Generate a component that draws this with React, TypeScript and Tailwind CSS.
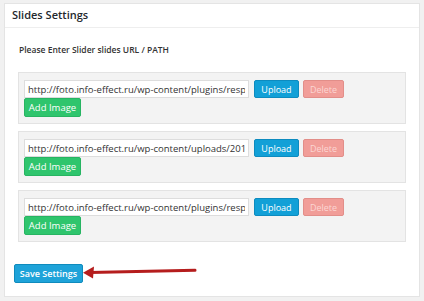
import React from "react";

const rows = [
  "http://foto.info-effect.ru/wp-content/plugins/responsive-slider/img/slide1.jpg",
  "http://foto.info-effect.ru/wp-content/uploads/2015/03/slide2.jpg",
  "http://foto.info-effect.ru/wp-content/plugins/responsive-slider/img/slide3.jpg",
];

const SlideRow = ({ url }: { url: string }) => (
  <div className="flex h-[52px] flex-col items-start border border-[#e3e3e3] bg-[#f3f3f3] pl-[5px] pt-[7px]">
    <div className="flex h-[18px] items-center">
      <input
        readOnly
        value={url}
        className="h-[18px] w-[225px] border border-[#dddddd] bg-white px-[3px] text-[9.5px] leading-none text-[#333] outline-none"
      />
      <button className="ml-[5px] h-[18px] w-[45px] rounded-[2px] border border-[#0d8bbf] bg-[#12a0d7] text-[9px] leading-none text-white">
        Upload
      </button>
      <button className="ml-[4px] h-[18px] w-[41px] rounded-[2px] border border-[#e28e89] bg-[#f19d98] text-[9px] leading-none text-[#fcd6d3]">
        Delete
      </button>
    </div>
    <button className="block h-[19px] w-[57px] rounded-[2px] border border-[#27b462] bg-[#2fc56d] text-[9.5px] leading-none text-white">
      Add Image
    </button>
  </div>
);

export default function App() {
  return (
    <div
      className="relative h-[301px] w-[424px] bg-[#f1f1f1] px-[4px] pt-[3px]"
      style={{ fontFamily: '"Open Sans", "Noto Sans", sans-serif' }}
    >
      <div className="h-[294px] border border-[#e4e4e4] bg-white">
        <div className="flex h-[24px] items-center border-b border-[#eeeeee] pl-[7px] text-[11px] font-semibold text-[#23282d]">
          Slides Settings
        </div>
        <div className="px-[9px]">
          <div className="h-[44px] pl-[5px] pt-[18px] text-[8.5px] font-semibold leading-none text-[#333]">
            Please Enter Slider slides URL / PATH
          </div>
          <div className="mr-[4px] flex flex-col gap-[7px] pl-[4px]">
            {rows.map((u, i) => (
              <SlideRow key={i} url={u} />
            ))}
          </div>
          <button className="mt-[22px] block h-[19px] w-[69px] rounded-[2px] border border-[#0f8bbd] bg-[#1ea3d9] text-[9px] font-semibold leading-none text-white">
            Save Settings
          </button>
        </div>
      </div>
      <svg
        className="absolute left-[80px] top-[262px]"
        width="120"
        height="20"
        viewBox="0 0 120 20"
      >
        <path d="M10 10.5 L115 8.3" stroke="#b51d1d" strokeWidth="3" strokeLinecap="round" fill="none" />
        <path d="M3 10.7 L14 4.5 L13 16.5 Z" fill="#b51d1d" />
      </svg>
    </div>
  );
}
